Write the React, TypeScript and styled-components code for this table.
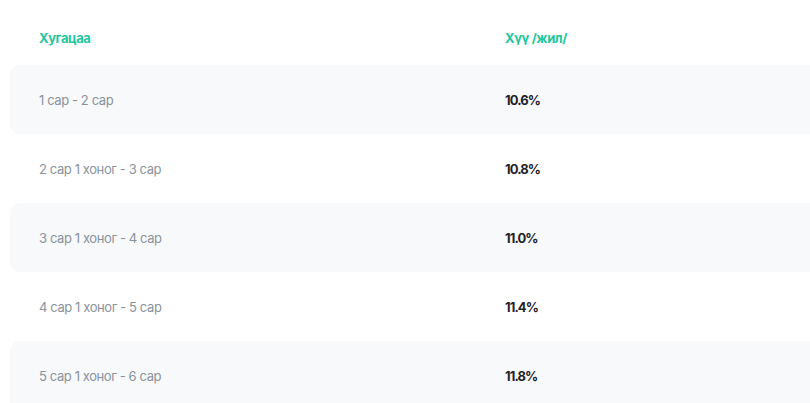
import React from 'react';
import styled, { createGlobalStyle } from 'styled-components';

const GlobalStyle = createGlobalStyle`
  html, body {
    margin: 0;
    padding: 0;
    background: #ffffff;
    overflow: hidden;
  }
  body {
    font-family: Inter, "Noto Sans", sans-serif;
  }
`;

const rates = [
  { term: '1 сар - 2 сар', rate: '10.6%' },
  { term: '2 сар 1 хоног - 3 сар', rate: '10.8%' },
  { term: '3 сар 1 хоног - 4 сар', rate: '11.0%' },
  { term: '4 сар 1 хоног - 5 сар', rate: '11.4%' },
  { term: '5 сар 1 хоног - 6 сар', rate: '11.8%' },
];

const Page = styled.div`
  width: 100vw;
  height: 100vh;
  overflow: hidden;
`;

const Table = styled.div`
  width: 932px;
  margin-left: 10px;
  padding-top: 10px;
`;

const Row = styled.div<{ $striped?: boolean; $header?: boolean }>`
  display: grid;
  grid-template-columns: 466px 466px;
  align-items: center;
  height: ${(p) => (p.$header ? '55px' : '69px')};
  border-radius: 10px;
  background: ${(p) => (p.$striped ? '#f7f9fa' : 'transparent')};
`;

const HeadCell = styled.div`
  padding-left: 29px;
  font-size: 13px;
  font-weight: 700;
  letter-spacing: -0.4px;
  color: #22c79d;
`;

const TermCell = styled.div`
  padding-left: 29px;
  font-size: 13px;
  letter-spacing: -0.4px;
  color: #8a939c;
`;

const RateCell = styled.div`
  padding-left: 29px;
  font-size: 13px;
  font-weight: 700;
  letter-spacing: -0.9px;
  color: #1f2328;
`;

const App = () => {
  return (
    <Page>
      <GlobalStyle />
      <Table>
        <Row $header>
          <HeadCell>Хугацаа</HeadCell>
          <HeadCell>Хүү /жил/</HeadCell>
        </Row>
        {rates.map((r, i) => (
          <Row key={r.term} $striped={i % 2 === 0}>
            <TermCell>{r.term}</TermCell>
            <RateCell>{r.rate}</RateCell>
          </Row>
        ))}
      </Table>
    </Page>
  );
};

export default App;
